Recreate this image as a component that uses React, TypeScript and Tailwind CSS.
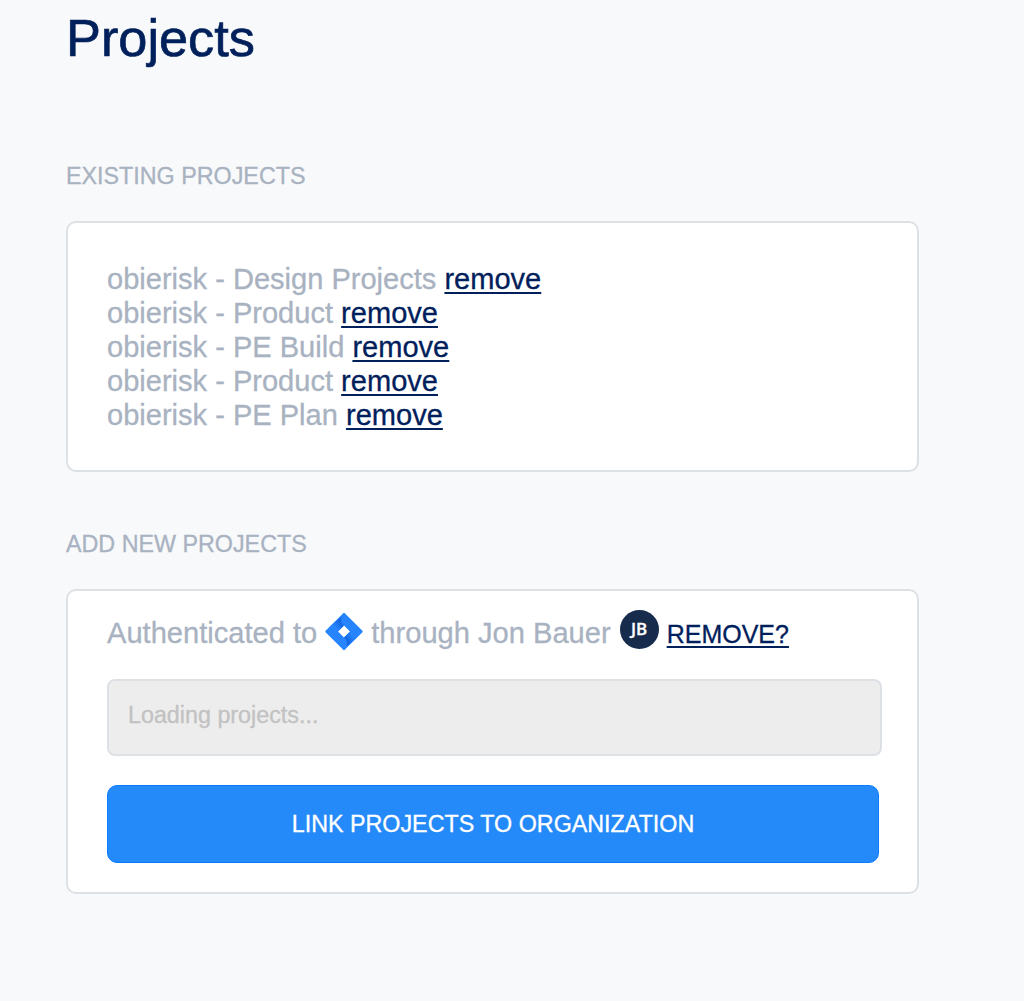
import React from 'react'

interface Project {
  id: number
  site: string
  name: string
}

const projects: Project[] = [
  { id: 1, site: 'obierisk', name: 'Design Projects' },
  { id: 2, site: 'obierisk', name: 'Product' },
  { id: 3, site: 'obierisk', name: 'PE Build' },
  { id: 4, site: 'obierisk', name: 'Product' },
  { id: 5, site: 'obierisk', name: 'PE Plan' }
]

function JiraIcon() {
  return (
    <svg className="w-[38px] h-[39px] shrink-0" viewBox="0 0 38 39">
      <defs>
        <linearGradient id="jiraTop" x1="18" y1="8" x2="10" y2="15" gradientUnits="userSpaceOnUse">
          <stop offset="0.1" stopColor="#0f5fd8" />
          <stop offset="1" stopColor="#2684ff" />
        </linearGradient>
        <linearGradient id="jiraBottom" x1="20" y1="31" x2="28" y2="24" gradientUnits="userSpaceOnUse">
          <stop offset="0.1" stopColor="#0f5fd8" />
          <stop offset="1" stopColor="#2684ff" />
        </linearGradient>
      </defs>
      <path fill="#2684ff" fillRule="evenodd" d="M19 .5 37.200 18.600q.9.9 0 1.800L19 38.500.8 20.400q-.9-.9 0-1.800ZM19 13.500l-6 6 6 6 6-6Z" />
      <path fill="url(#jiraTop)" d="M16.600 5c-1.300 3-.6 6.300 2.400 8.500l-6 6-7.600-5.300Z" />
      <path fill="url(#jiraBottom)" d="M21.400 34c1.300-3 .6-6.300-2.400-8.500l6-6 7.600 5.300Z" />
    </svg>
  )
}

export default function App() {
  return (
    <div className="min-h-[1001px] bg-[#f8f9fb] pl-[66px] pt-2 font-['Liberation_Sans',Arial,sans-serif] text-[#a8b2c1] [-webkit-text-stroke:0.3px]">
      <h1 className="h-[60px] text-[52.3px] leading-[60px] text-[#00205b] [-webkit-text-stroke:0.7px]">Projects</h1>

      {/* Existing projects */}
      <h2 className="mt-[94px] h-7 text-[23.3px] leading-7">EXISTING PROJECTS</h2>
      <div className="mt-[31px] h-[251px] w-[853px] rounded-[10px] border-2 border-[#dde1e6] bg-white pl-[39px] pt-[39px] text-[29.05px] leading-[34px]">
        {projects.map(project => (
          <div key={project.id}>
            {project.site} - {project.name}{' '}
            <a href="#" className="text-[#00205b] underline decoration-2 underline-offset-[3px]">remove</a>
          </div>
        ))}
      </div>

      {/* Add new projects */}
      <h2 className="mt-[58px] h-7 text-[23.3px] leading-7">ADD NEW PROJECTS</h2>
      <div className="mt-[31px] h-[305px] w-[853px] rounded-[10px] border-2 border-[#dde1e6] bg-white pl-[39px] pt-[18px]">
        <div className="flex h-[42px] items-center text-[29.1px] leading-[42px]">
          <span className="pt-[5px]">Authenticated to</span>
          <span className="mx-2 flex pt-[2px]"><JiraIcon /></span>
          <span className="pt-[5px]">through Jon Bauer</span>
          <span className="ml-[9px] mb-[2px] flex h-[39px] w-[39px] items-center justify-center rounded-full bg-[#172b4d] pb-px font-['Open_Sans',sans-serif] text-[17px] font-semibold leading-none text-white">JB</span>
          <a href="#" className="ml-2 pt-[7px] text-[25px] text-[#00205b] underline decoration-2 underline-offset-[3px]">REMOVE?</a>
        </div>
        <input
          disabled
          placeholder="Loading projects..."
          className="mt-[28px] block h-[77px] w-[775px] rounded-[8px] border-2 border-[#dde1e6] bg-[#ededed] px-[19px] pb-1 text-[23.3px] placeholder:text-[#c2c2c2]"
        />
        <button className="mt-[29px] block h-[78px] w-[772px] rounded-[10px] border border-[#0a7cff] bg-[#258af9] text-[23.3px] text-white">
          LINK PROJECTS TO ORGANIZATION
        </button>
      </div>
    </div>
  )
}
